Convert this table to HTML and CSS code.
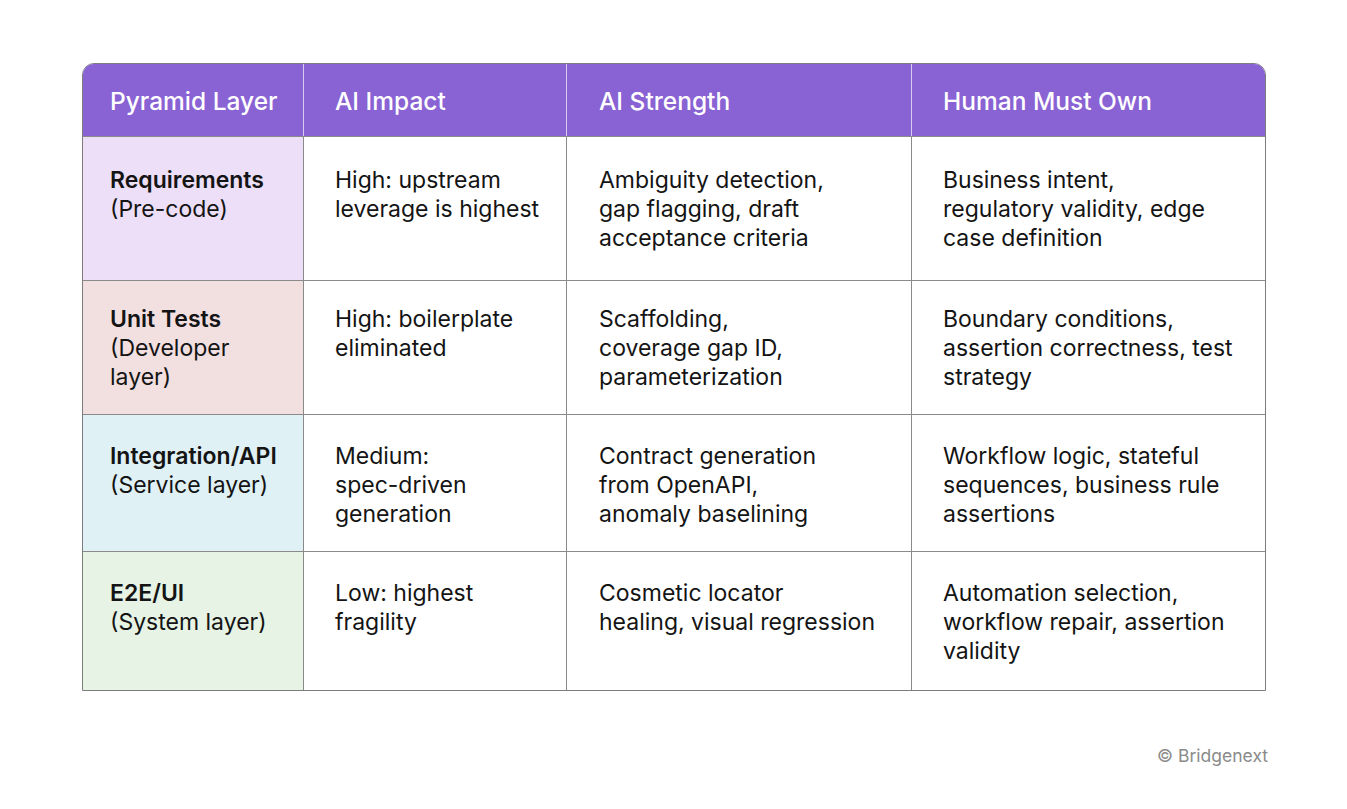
FILE: index.html
```html
<!DOCTYPE html>
<html lang="en">
<head>
  <meta charset="UTF-8">
  <title>Test Pyramid and AI</title>
  <link rel="stylesheet" href="styles.css">
</head>
<body>
  <div class="page">
    <table class="pyramid">
      <colgroup>
        <col class="c1">
        <col class="c2">
        <col class="c3">
        <col class="c4">
      </colgroup>
      <thead>
        <tr>
          <th>Pyramid Layer</th>
          <th>AI Impact</th>
          <th>AI Strength</th>
          <th>Human Must Own</th>
        </tr>
      </thead>
      <tbody>
        <tr class="r1">
          <td class="layer req"><strong>Requirements</strong><br>(Pre-code)</td>
          <td>High: upstream<br>leverage is highest</td>
          <td>Ambiguity detection,<br>gap flagging, draft<br>acceptance criteria</td>
          <td>Business intent,<br>regulatory validity, edge<br>case definition</td>
        </tr>
        <tr class="r2">
          <td class="layer unit"><strong>Unit Tests</strong><br>(Developer<br>layer)</td>
          <td>High: boilerplate<br>eliminated</td>
          <td>Scaffolding,<br>coverage gap ID,<br>parameterization</td>
          <td>Boundary conditions,<br>assertion correctness, test<br>strategy</td>
        </tr>
        <tr class="r3">
          <td class="layer api"><strong>Integration/API</strong><br>(Service layer)</td>
          <td>Medium:<br>spec-driven<br>generation</td>
          <td>Contract generation<br>from OpenAPI,<br>anomaly baselining</td>
          <td>Workflow logic, stateful<br>sequences, business rule<br>assertions</td>
        </tr>
        <tr class="r4">
          <td class="layer e2e"><strong>E2E/UI</strong><br>(System layer)</td>
          <td>Low: highest<br>fragility</td>
          <td>Cosmetic locator<br>healing, visual regression</td>
          <td>Automation selection,<br>workflow repair, assertion<br>validity</td>
        </tr>
      </tbody>
    </table>
    <div class="credit">&copy; Bridgenext</div>
  </div>
</body>
</html>
```

FILE: styles.css
```css
body {
  margin: 0;
  background: #ffffff;
  font-family: Inter, "Noto Sans", sans-serif;
  color: #141414;
}

.page {
  width: 1347px;
  height: 809px;
  padding: 63px 0 0 82px;
  box-sizing: border-box;
  position: relative;
}

.pyramid {
  width: 1184px;
  border-collapse: separate;
  border-spacing: 0;
  table-layout: fixed;
  border: 1px solid #7d7d7d;
  border-radius: 12px 12px 0 0;
  overflow: hidden;
}

.c1 { width: 220px; }
.c2 { width: 263px; }
.c3 { width: 345px; }
.c4 { width: 354px; }

.pyramid th,
.pyramid td {
  box-sizing: border-box;
}

.pyramid th {
  background: #8962d4;
  color: #ffffff;
  font-size: 24.5px;
  font-weight: 500;
  text-align: left;
  height: 72px;
  padding: 2px 0 0 31px;
  border-left: 1px solid #d9ccf1;
}

.pyramid th:first-child {
  border-left: none;
  padding-left: 27px;
}

.pyramid td {
  font-size: 23px;
  line-height: 29px;
  vertical-align: top;
  padding: 0 0 0 31px;
  border-left: 1px solid #8a8a8a;
  border-top: 1px solid #8a8a8a;
  white-space: nowrap;
}

.pyramid th:nth-child(3),
.pyramid td:nth-child(3) {
  padding-left: 32px;
}

.pyramid td:first-child {
  border-left: none;
  padding-left: 27px;
}

.pyramid strong {
  font-weight: 600;
}

.r1 td { height: 144px; padding-top: 29px; }
.r2 td { height: 134px; padding-top: 24px; }
.r3 td { height: 137px; padding-top: 27px; }
.r4 td { height: 139px; padding-top: 27px; }

.req { background: #ecdff7; }
.unit { background: #f2dfe0; }
.api { background: #e0f1f6; }
.e2e { background: #e6f3e5; }

.credit {
  position: absolute;
  right: 79px;
  top: 745px;
  font-size: 17.5px;
  color: #8a8a8a;
}
```
